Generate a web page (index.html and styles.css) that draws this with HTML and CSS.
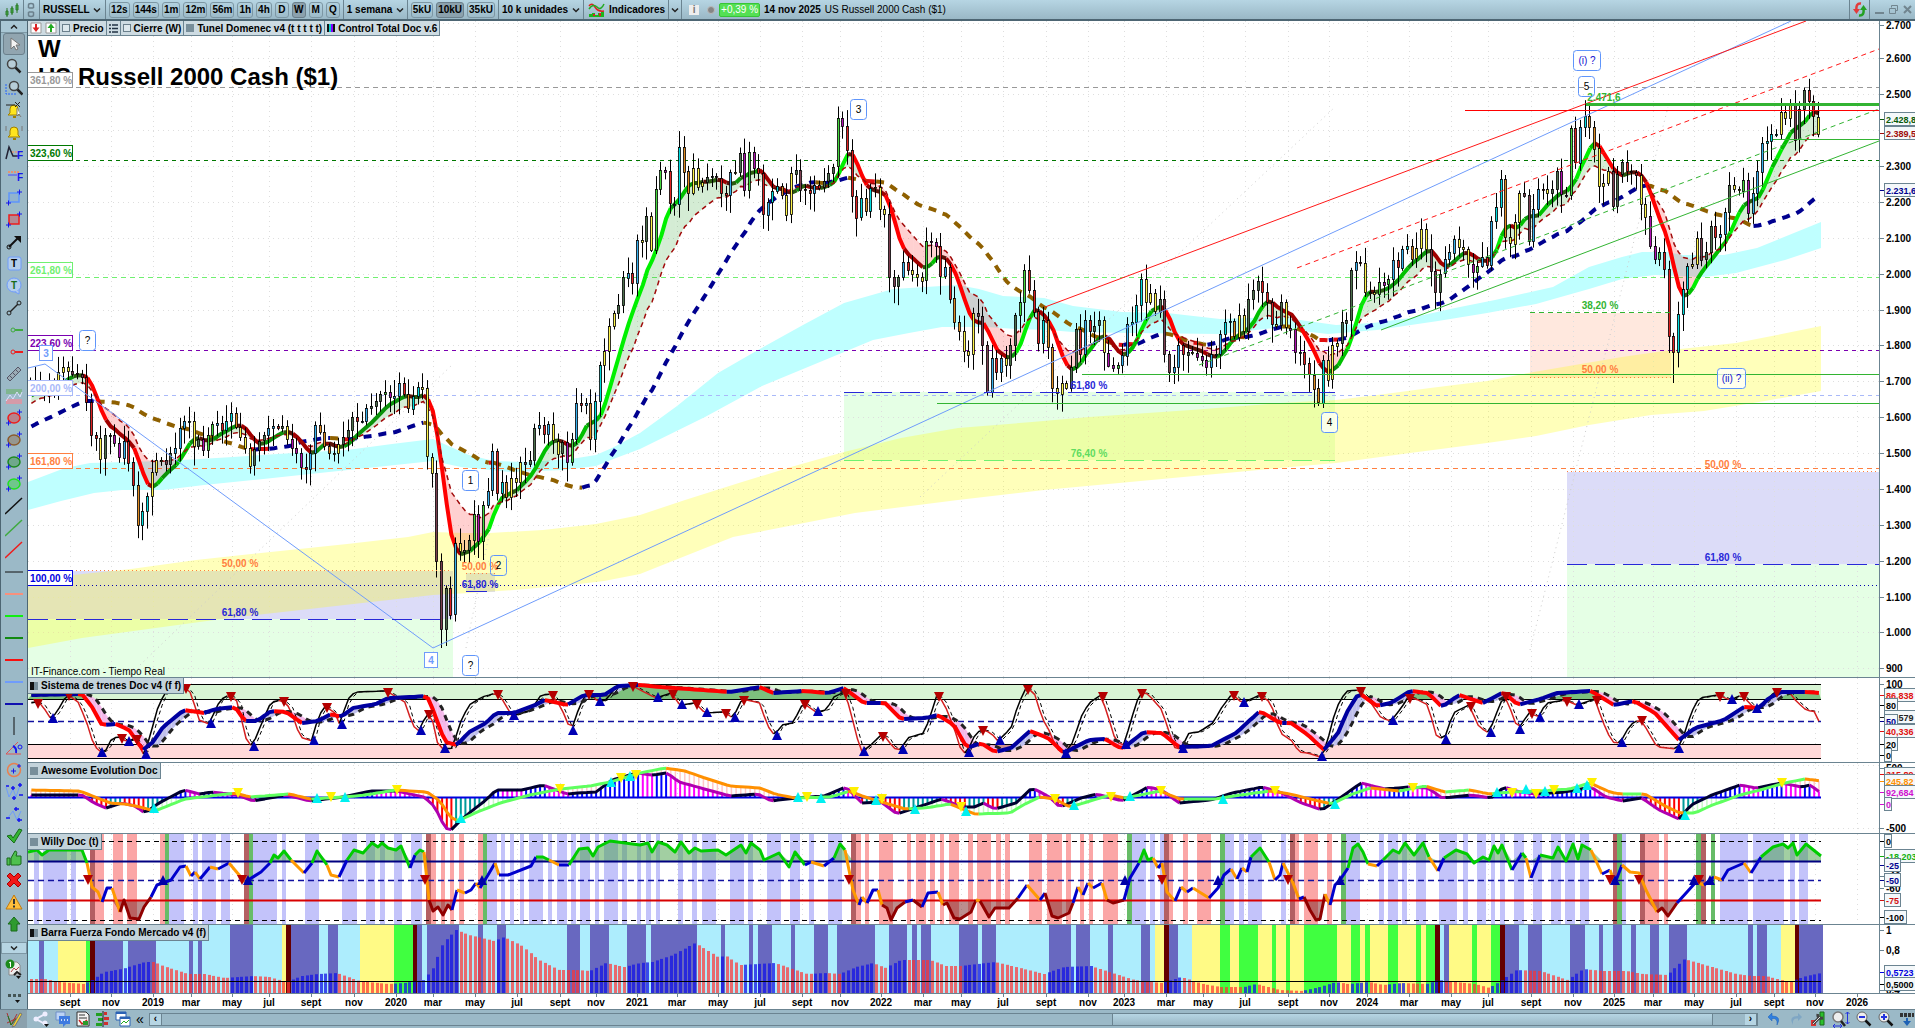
FILE: index.html
```html
<!DOCTYPE html>
<html lang="es">
<head>
  <meta charset="UTF-8">
  <meta name="viewport" content="width=device-width, initial-scale=1">
  <title>US Russell 2000 Cash ($1)</title>
  <link rel="stylesheet" href="styles.css">
</head>
<body>

<!-- Top bar -->
<header class="topbar">
  <button class="icon-btn logo"><svg width="16" height="16" viewBox="0 0 16 16"><path d="M3 6v9M8 4v9M13 1v10" stroke="#2c7a2c"/><path d="M2 9h2v4H2zM7 6h2v5H7zM12 3h2v5h-2z" fill="#3faa3f" stroke="#2c7a2c"/></svg></button>
  <button class="icon-btn link"><svg width="8" height="16" viewBox="0 0 8 16"><path d="M1.500 6V3q0-1.500 2.500-1.500T6.500 3v3M1.500 10v3q0 1.500 2.500 1.500T6.500 13v-3M1.500 6h5M1.500 10h5" fill="none" stroke="#6b808c" stroke-width="1.500"/></svg></button>
  <div class="group symbol">
    <select aria-label="Valor"><option>RUSSELL</option></select>
    <svg class="chev" width="8" height="6" viewBox="0 0 8 6"><path d="M1 1.500l3 3 3-3"/></svg>
  </div>
  <div class="group frames">
    <button>12s</button><button>144s</button><button>1m</button><button>12m</button><button>56m</button><button>1h</button><button>4h</button><button>D</button><button class="on">W</button><button>M</button><button>Q</button>
  </div>
  <div class="group">
    <select aria-label="Intervalo"><option>1 semana</option></select>
    <svg class="chev" width="8" height="6" viewBox="0 0 8 6"><path d="M1 1.500l3 3 3-3"/></svg>
  </div>
  <div class="group units">
    <button>5kU</button><button class="on">10kU</button><button>35kU</button>
  </div>
  <div class="group">
    <select aria-label="Unidades"><option>10 k unidades</option></select>
    <svg class="chev" width="8" height="6" viewBox="0 0 8 6"><path d="M1 1.500l3 3 3-3"/></svg>
  </div>
  <button class="indicators"><svg width="17" height="16" viewBox="0 0 17 16"><path d="M1 4q3-4 6 1t9 4" fill="none" stroke="#d22" stroke-width="1.500"/><path d="M1 7q4-6 8-2t7-3" fill="none" stroke="#2a2" stroke-width="1.500"/><path d="M1 15v-3h3v-1h3v2h3v-2h3v-1h3v5z" fill="#1cb51c"/><path d="M5 12h2v2H5zM11 11h2v3h-2z" fill="#d22"/></svg>Indicadores</button>
  <button class="drop"><svg class="chev" width="8" height="6" viewBox="0 0 8 6"><path d="M1 1.500l3 3 3-3"/></svg></button>
  <div class="quote">
    <span class="info">i</span><span class="dot"></span><span class="badge">+0,39 %</span><b>14 nov 2025</b><span>US Russell 2000 Cash ($1)</span>
  </div>
  <button class="refresh"><svg width="14" height="15" viewBox="0 0 14 15"><path d="M8 1.500C4 1 3 4 3.500 8" fill="none" stroke="#e23b3b" stroke-width="2.500"/><path d="M0 7h7l-3.500 5z" fill="#e23b3b"/><path d="M6 13.500c4 .5 5-2.500 4.500-6" fill="none" stroke="#23a023" stroke-width="2.500"/><path d="M7 8h7l-3.500-5z" fill="#23a023"/></svg></button>
  <div class="window">
    <button><svg width="9" height="9" viewBox="0 0 9 9"><path d="M0 8h9" stroke-width="2"/></svg></button>
    <button><svg width="9" height="9" viewBox="0 0 9 9"><path d="M2.500 2.500v-2h6v5h-2M.5 3.500h6v5h-6z"/></svg></button>
    <button><svg width="9" height="9" viewBox="0 0 9 9"><path d="M1 1l7 7M8 1l-7 7" stroke-width="2"/></svg></button>
  </div>
</header>

<div class="workspace">
  <!-- Drawing tools -->
  <nav class="tools">
    <button class="collapse"><svg class="chev" width="8" height="6" viewBox="0 0 8 6"><path d="M1 4.500l3-3 3 3"/></svg></button>
    <div class="tool-list" id="tools"></div>
    <button class="expand"><svg class="chev" width="8" height="6" viewBox="0 0 8 6"><path d="M1 1.500l3 3 3-3"/></svg></button>
    <button class="settings"><svg width="18" height="20" viewBox="0 0 18 20"><path d="M4 3h8l3 3v10H4z" fill="#eee" stroke="#888"/><path d="M6 13l3-4 2 2 3-3" fill="none" stroke="#a44"/><circle cx="5" cy="5" r="4.500" fill="#1c8a1c"/><path d="M4 4l1.500-1v5" stroke="#fff" fill="none"/><path d="M9 16l3-3 4 3" fill="none" stroke="#222" stroke-width="2"/><path d="M11 17h5l-2.500 3z" fill="#111"/></svg></button>
    <button class="more"><svg width="18" height="14" viewBox="0 0 18 14"><path d="M3 4h3v3H3zM8 4h3v3H8zM13 4h3v3h-3z" fill="#455"/><path d="M10 10h5l-2.500 3z" fill="#111"/></svg></button>
  </nav>

  <!-- Chart panes -->
  <main class="charts">
    <section class="pane price">
      <svg class="plot" id="price" preserveAspectRatio="none" viewBox="28 21 1851 656"></svg>
      <svg class="scale" id="priceScale" preserveAspectRatio="none" viewBox="0 21 35 656"></svg>
      <div class="legend">
        <span><svg width="12" height="12" viewBox="0 0 12 12"><path d="M1 1h10v10H1z" fill="#fff" stroke="#999"/><path d="M6 2v4" stroke="#d22" stroke-width="2"/><path d="M2.500 5.500h7L6 10z" fill="#d22"/></svg><svg width="12" height="12" viewBox="0 0 12 12"><path d="M1 1h10v10H1z" fill="#fff" stroke="#999"/><path d="M6 10V6" stroke="#2a2" stroke-width="2"/><path d="M2.500 6h7L6 1.500z" fill="#2a2"/></svg></span>
        <label><input type="checkbox">Precio</label>
        <button><svg width="9" height="9" viewBox="0 0 9 9"><path d="M0 1h2M0 4.500h2M0 8h2M3 1h6M3 4.500h6M3 8h6" stroke="#234" stroke-width="1.500"/></svg></button>
        <label><input type="checkbox">Cierre (W)</label>
        <span><i class="swatch"></i>Tunel Domenec v4 (t t t t t)</span>
        <span><i class="swatch stripes"></i>Control Total Doc v.6</span>
      </div>
      <h1>W<br>US Russell 2000 Cash ($1)</h1>
      <small>IT-Finance.com - Tiempo Real</small>
      <svg class="tags" id="tags" preserveAspectRatio="none" viewBox="28 21 1851 656"></svg>
    </section>
    <section class="pane trenes">
      <svg class="plot" id="trenes" preserveAspectRatio="none" viewBox="28 0 1851 84"></svg>
      <svg class="scale" id="trenesScale" preserveAspectRatio="none" viewBox="0 0 35 84"></svg>
      <div class="legend"><span><i class="swatch half"></i>Sistema de trenes Doc v4 (f f)</span></div>
    </section>
    <section class="pane awesome">
      <svg class="plot" id="awesome" preserveAspectRatio="none" viewBox="28 0 1851 70"></svg>
      <svg class="scale" id="awesomeScale" preserveAspectRatio="none" viewBox="0 0 35 70"></svg>
      <div class="legend"><span><i class="swatch"></i>Awesome Evolution Doc</span></div>
    </section>
    <section class="pane willy">
      <svg class="plot" id="willy" preserveAspectRatio="none" viewBox="28 0 1851 90"></svg>
      <svg class="scale" id="willyScale" preserveAspectRatio="none" viewBox="0 0 35 90"></svg>
      <div class="legend"><span><i class="swatch"></i>Willy Doc (t)</span></div>
    </section>
    <section class="pane barra">
      <svg class="plot" id="barra" preserveAspectRatio="none" viewBox="28 0 1851 68"></svg>
      <svg class="scale" id="barraScale" preserveAspectRatio="none" viewBox="0 0 35 68"></svg>
      <div class="legend"><span><i class="swatch half"></i>Barra Fuerza Fondo Mercado v4 (f)</span></div>
    </section>
    <svg class="dates" id="dates" preserveAspectRatio="none" viewBox="28 0 1887 15"></svg>
  </main>
</div>

<!-- Bottom bar -->
<footer class="bottombar">
  <button class="draw"><svg width="18" height="17" viewBox="0 0 18 17"><path d="M2 2l4 12L12 3M2 12L14 6" fill="none" stroke="#a33"/><path d="M3 5l3 9 5-6" fill="none" stroke="#1c7a1c"/><path d="M8 14l7-12 2 1-7 12-3 1z" fill="#f6d32e" stroke="#777"/></svg></button>
  <button><svg width="18" height="16" viewBox="0 0 18 16"><path d="M13 3L4 8l9 5" fill="none" stroke="#eef" stroke-width="2"/><circle cx="13" cy="3" r="2.500" fill="#eef"/><circle cx="4" cy="8" r="2.500" fill="#eef"/><circle cx="13" cy="12" r="2.500" fill="#eef"/><path d="M12 13h5l-2.500 3z" fill="#111"/></svg></button>
  <button><svg width="16" height="16" viewBox="0 0 16 16"><path d="M1 1h9v8H1z" fill="#bcd3f5" stroke="#6f8fc8"/><path d="M4 5h11v8h-4l-3 3v-3H4z" fill="#3f7be0"/><path d="M6 9h1M9 9h1M12 9h1" stroke="#fff" stroke-width="1.500"/></svg></button>
  <button><svg width="14" height="16" viewBox="0 0 14 16"><path d="M1 1h9l3 3v11H1z" fill="#f4f4f4" stroke="#333"/><path d="M3 4h6M3 7h8" stroke="#333"/><path d="M3 9l3 4 5-4" stroke="#c22" fill="none" stroke-width="1.500"/><path d="M7 10h5v4H7z" fill="#2b9b2b"/></svg></button>
  <button><svg width="15" height="16" viewBox="0 0 15 16"><path d="M1 2h6v3H1zM3 7h5v3H3zM1 12h6v3H1z" fill="#22a022"/><path d="M9 1h3v3H9zM9 6h5v3H9zM9 11h4v3H9z" fill="#d03030"/><path d="M8 0v16" stroke="#222"/></svg></button>
  <button><svg width="16" height="16" viewBox="0 0 16 16"><path d="M1 1h10v8H1z" fill="#fff" stroke="#2b62b5"/><path d="M1 2h10" stroke="#2b62b5" stroke-width="2"/><path d="M5 6h10v9H5z" fill="#fff" stroke="#2b62b5"/><path d="M5 7h10" stroke="#2b62b5" stroke-width="2"/><path d="M6 13l3-3 2 2 3-3" fill="none" stroke="#2a2"/></svg></button>
  <span class="less">«</span>
  <div class="scrollbar"><button>‹</button><div class="track"><div class="thumb"></div></div><button>›</button></div>
  <button><svg width="16" height="14" viewBox="0 0 14 14"><path d="M5 1L1 5l4 4V6.500q6-1 5 6.500 5-9-5-9z" fill="#2f7fe0" stroke="#1c5fb5" stroke-width=".5"/></svg></button>
  <button><svg width="16" height="14" viewBox="0 0 14 14"><path d="M9 1l4 4-4 4V6.500q-6-1-5 6.500-5-9 5-9z" fill="#7fa6c4"/></svg></button>
  <button><svg width="16" height="16" viewBox="0 0 16 16"><path d="M10 1h4v13h-4z" fill="#2cc02c" stroke="#186b18"/><path d="M1 9h5v6H1z" fill="#d33"/><path d="M3 13l7-7M8 3q-1 5 5 4" fill="none" stroke="#444" stroke-width="3"/><path d="M3 13l7-7" stroke="#ddd"/></svg></button>
  <button><svg width="18" height="17" viewBox="0 0 18 17"><circle cx="6" cy="6" r="5" fill="#eee" stroke="#777" stroke-width="1.500"/><path d="M9 10l4 5" stroke="#222" stroke-width="2.500"/><path d="M15.500 1v12M13.500 3l2-2 2 2M13.500 11l2 2 2-2M1 15h9M3 13l-2 2 2 2M8 13l2 2-2 2" fill="none" stroke="#2433dd"/></svg></button>
  <button><svg width="16" height="16" viewBox="0 0 16 16"><circle cx="6" cy="6" r="5" fill="#eee" stroke="#666"/><path d="M9.500 9.500l5 5" stroke="#111" stroke-width="2.500"/><path d="M3 6h6" stroke="#2433dd" stroke-width="2"/></svg></button>
  <button><svg width="16" height="16" viewBox="0 0 16 16"><circle cx="6" cy="6" r="5" fill="#eee" stroke="#666"/><path d="M9.500 9.500l5 5" stroke="#111" stroke-width="2.500"/><path d="M3 6h6M6 3v6" stroke="#2433dd" stroke-width="2"/></svg></button>
  <button><svg width="14" height="15" viewBox="0 0 14 15"><path d="M0 3h14" stroke="#333" stroke-width="4" stroke-dasharray="3 1"/><path d="M7 6v5" stroke="#1f62b5" stroke-width="2"/><path d="M3 9h8l-4 5z" fill="#1f62b5"/></svg></button>
</footer>

<script src="chart.js"></script>
</body>
</html>
```

FILE: styles.css
```css
* {
  box-sizing: border-box;
}
body {
  margin: 0;
  height: 100vh;
  display: flex;
  flex-direction: column;
  overflow: hidden;
  background: #9bb9c7;
  color: #000;
  font-family: "Liberation Sans", Arial, sans-serif;
  font-size: 10px;
}
button, select {
  font: inherit;
  color: inherit;
  padding: 0;
  margin: 0;
  border: 0;
  background: none;
  white-space: nowrap;
}
select {
  appearance: none;
}
svg {
  display: block;
  flex: none;
}
.chev path {
  fill: none;
  stroke: #222;
  stroke-width: 1.5;
}

/* top bar */
.topbar {
  flex: none;
  height: 21px;
  display: flex;
  align-items: stretch;
  background: linear-gradient(#b6d5e3, #9ab8c6);
  border-bottom: 2px solid #4d6673;
  font-weight: bold;
}
.topbar > * {
  display: flex;
  align-items: center;
  border-right: 1px solid #6b8491;
}
.logo {
  width: 24px;
  padding-left: 4px;
}
.link {
  width: 16px;
  padding-left: 3px;
}
.group {
  padding: 0 3px;
  gap: 3px;
}
.symbol {
  padding-right: 4px;
}
.frames button, .units button {
  height: 16px;
  min-width: 14px;
  padding: 0 1px;
  border: 1px solid #7d97a4;
  border-radius: 3px;
  text-align: center;
}
.frames .on, .units .on {
  background: #8ba1ad;
  border-color: #6b808c;
}
.indicators {
  padding: 0 3px 0 4px;
  gap: 4px;
}
.drop {
  padding: 0 2px;
}
.quote {
  flex: 1;
  padding-left: 7px;
  gap: 4px;
  font-weight: normal;
}
.info {
  width: 10px;
  height: 10px;
  margin-right: 4px;
  background: #eee;
  color: #777;
  font-weight: bold;
  line-height: 10px;
  text-align: center;
}
.dot {
  width: 8px;
  height: 8px;
  border-radius: 50%;
  background: #858585;
  border: 1px solid #bbb;
}
.badge {
  height: 14px;
  padding: 0 1px;
  border: 1px solid #37c437;
  border-radius: 2px;
  background: #54e054;
  color: #fff;
  line-height: 12px;
}
.refresh {
  width: 20px;
  padding-left: 3px;
}
.window {
  width: 45px;
  gap: 5px;
  padding-left: 5px;
  border: 0;
}
.window path {
  fill: none;
  stroke: #71858f;
}

/* left tools */
.workspace {
  flex: 1;
  min-height: 0;
  display: flex;
}
.tools {
  width: 28px;
  flex: none;
  display: flex;
  flex-direction: column;
  border-left: 1px solid #4d6673;
  border-right: 1px solid #4d6673;
}
.tools button {
  display: flex;
  align-items: center;
  justify-content: center;
  flex: none;
  height: 22px;
}
.tools .collapse {
  height: 12px;
  background: #a9c7d5;
  border-bottom: 1px solid #7d97a4;
}
.tool-list {
  flex: 1;
  min-height: 0;
  overflow: hidden;
  display: flex;
  flex-direction: column;
}
.tool-list button:first-child {
  margin: 0 2px;
  border: 1px solid #6b808c;
  border-radius: 3px;
  background: #91a5b0;
}
.tools .expand {
  height: 12px;
  background: #b6d5e3;
  border: 1px solid #7d97a4;
}
.tools .settings {
  height: 30px;
}
.tools .more {
  height: 25px;
}

/* panes, the shares leave out the 1px border of each */
.charts {
  flex: 1;
  min-width: 0;
  display: flex;
  flex-direction: column;
  background: #fff;
}
.pane {
  position: relative;
  min-height: 0;
  display: flex;
  border-bottom: 1px solid #6b8491;
}
.price { flex: 656 0 0; }
.trenes { flex: 84 0 0; }
.awesome { flex: 70 0 0; }
.willy { flex: 90 0 0; }
.barra { flex: 68 0 0; }
.plot {
  flex: 1;
  min-width: 0;
  height: 100%;
}
.scale {
  width: 36px;
  height: 100%;
  border-left: 1px solid #6b8491;
}
.tags {
  position: absolute;
  top: 0;
  left: 0;
  width: calc(100% - 36px);
  height: 100%;
}
.dates {
  width: 100%;
  height: 15px;
}
svg text {
  font-size: 10px;
  font-weight: bold;
}
svg .thin {
  font-weight: normal;
}
svg .value {
  font-size: 9px;
}
.legend {
  position: absolute;
  top: 0;
  left: 0;
  z-index: 1;
  display: flex;
  background: #cddbe2;
  border: 1px solid #6b8491;
  border-width: 0 1px 1px 0;
  font-weight: bold;
}
.legend > * {
  height: 14px;
  display: flex;
  align-items: center;
  gap: 3px;
  padding: 0 2px;
  border-right: 1px solid #6b8491;
}
.legend > :last-child {
  border: 0;
}
.legend input {
  appearance: none;
  width: 8px;
  height: 8px;
  margin: 0;
  border: 1px solid #6b808c;
  background: #dde8ed;
}
.swatch {
  width: 8px;
  height: 8px;
  background: #788e9a;
}
.half {
  background: linear-gradient(to right, #111 50%, #788e9a 50%);
}
.stripes {
  background: linear-gradient(to right, #111 25%, #0cc 25% 50%, #80f 50% 70%, #111 70%);
}
.trenes .legend, .awesome .legend, .willy .legend, .barra .legend {
  background: #c3d3db;
}
.trenes .legend span, .awesome .legend span, .willy .legend span, .barra .legend span {
  height: 15px;
}
.price h1 {
  position: absolute;
  top: 14px;
  left: 10px;
  margin: 0;
  font-size: 24px;
  line-height: 28px;
}
.price small {
  position: absolute;
  bottom: 0;
  left: 3px;
  font-size: 10px;
}

/* bottom bar */
.bottombar {
  flex: none;
  height: 19px;
  display: flex;
  align-items: center;
  gap: 5px;
  border-top: 1px solid #6b8491;
}
.bottombar .draw {
  width: 27px;
  height: 18px;
  padding-left: 5px;
  background: #8ba1ad;
}
.less {
  font-size: 14px;
  line-height: 16px;
}
.scrollbar {
  flex: 1;
  height: 13px;
  display: flex;
  margin-right: 3px;
  border: 1px solid #6b8491;
}
.scrollbar button {
  width: 12px;
  font-weight: bold;
  line-height: 10px;
  background: #b6d5e3;
  border-right: 1px solid #6b8491;
}
.track {
  flex: 1;
  display: flex;
}
.thumb {
  width: 38%;
  margin-left: 60%;
  background: linear-gradient(#b6d5e3, #9ab8c6);
  border: 1px solid #6b8491;
  border-width: 0 1px;
}
.scrollbar ~ button {
  margin-right: 1px;
}
```

FILE: chart.js
```js
// ---------- helpers ----------
const $ = id => document.getElementById(id);
const FIRST = 31.4, STEP = 4.667, LAST = 1821;
const weekX = i => FIRST + i * STEP;
const priceY = p => 58.4 + (2600 - p) * 0.3588;
const pts = s => s.trim().split(/\s+/).map(p => p.split(',').map(Number));
const r = n => Math.round(n * 10) / 10;
const d = a => 'M' + a.map(p => r(p[0]) + ' ' + r(p[1])).join('L');
const line = (x1, y1, x2, y2, color, w = 1, dash = '') =>
  `<path d="M${x1} ${y1}L${x2} ${y2}" stroke="${color}" stroke-width="${w}" fill="none" stroke-dasharray="${dash}"/>`;
const rect = (x, y, w, h, fill, extra = '') =>
  `<rect x="${r(x)}" y="${r(y)}" width="${r(w)}" height="${r(h)}" fill="${fill}" ${extra}/>`;
const text = (x, y, s, color = '#000', extra = '') =>
  `<text x="${x}" y="${y}" fill="${color}" ${extra}>${s}</text>`;
const area = (a, b, fill) => `<path d="${d(a.concat([...b].reverse()))}Z" fill="${fill}"/>`;
const tri = (x, y, up, color, s = 5) => up
  ? `<path d="M${r(x - s)} ${r(y + s)}h${2 * s}l${-s} ${-2 * s}z" fill="${color}"/>`
  : `<path d="M${r(x - s)} ${r(y - s)}h${2 * s}l${-s} ${2 * s}z" fill="${color}"/>`;

function at(a, x) {
  if (x <= a[0][0]) return a[0][1];
  for (let i = 1; i < a.length; i++) {
    if (x <= a[i][0]) {
      const [x0, y0] = a[i - 1], [x1, y1] = a[i];
      return y0 + (y1 - y0) * (x - x0) / (x1 - x0);
    }
  }
  return a[a.length - 1][1];
}
// one path per run of equal colour
function runs(a, pick, w, dash = '') {
  let out = '', i = 1;
  while (i < a.length) {
    const c = pick(i);
    const run = [a[i - 1]];
    while (i < a.length && pick(i) === c) run.push(a[i++]);
    out += `<path d="${d(run)}" fill="none" stroke="${c}" stroke-width="${w}" stroke-linejoin="round" stroke-dasharray="${dash}"/>`;
  }
  return out;
}
// fill between two series, colour depends on which one is on top
function between(a, b, above, below) {
  let out = '';
  for (let i = 1; i < a.length; i++) {
    const up = a[i][1] + a[i - 1][1] < b[i][1] + b[i - 1][1];
    out += area([a[i - 1], a[i]], [b[i - 1], b[i]], up ? above : below);
  }
  return out;
}

// ---------- dates ----------
const ticks = [70, 111, 153, 191, 232, 269, 311, 354, 396, 433, 475, 517, 560, 596, 637, 677, 718, 760, 802, 840, 881, 923, 961, 1003, 1046, 1088, 1124, 1166, 1203, 1245, 1288, 1329, 1367, 1409, 1451, 1488, 1531, 1573, 1614, 1653, 1694, 1736, 1774, 1815, 1857];
const months = ['mar', 'may', 'jul', 'sept', 'nov'];
const tickName = i => i < 2 ? months[i + 3] : (i - 2) % 6 === 0 ? String(2019 + (i - 2) / 6) : months[(i - 2) % 6 - 1];
$('dates').innerHTML = ticks.map((x, i) => line(x + .5, 0, x + .5, 3, '#6b8491') + text(x, 12, tickName(i), '#000', 'text-anchor="middle"')).join('');
const grid = (h, top = 0) => ticks.map(x => line(x + .5, top, x + .5, h, '#dedede', 1, '1 4')).join('');

// ---------- weekly closes ----------
const close = `1700 1705 1695 1670 1690 1690 1725 1740 1730 1722 1720 1712 1643 1550 1543 1485 1550 1550 1527 1488 1535 1475 1411 1300 1338 1380 1447 1480 1482 1470 1500 1515 1570 1590 1590 1520 1540 1508 1550 1580 1585 1565 1590 1612 1572 1545 1515 1465 1510 1535 1550 1570 1575 1570 1575 1540 1515 1500 1460 1455 1500 1578 1558 1520 1500 1500 1525 1545 1565 1600 1590 1590 1625 1630 1645 1665 1670 1655 1660 1695 1665 1625 1660 1685 1680
1490 1445 1200 1010 1125 1050 1248 1225 1230 1258 1330 1255 1355 1395 1505 1388 1420 1378 1430 1420 1475 1470 1480 1570 1578 1553 1580 1535 1500 1530 1475 1540 1640 1635 1640 1540 1645 1745 1785 1855 1890 1912 1990 2003 1975 2095
2089 2160 2066 2236 2290 2285 2195 2195 2354 2285 2225 2295 2243 2255 2270 2271 2268 2225 2220 2284 2282 2335 2233 2340 2295 2280 2165 2200 2230 2245 2220 2165 2280 2290 2235 2232 2225 2248 2240 2258 2280 2298 2433 2412 2345 2217 2156 2210 2175 2238 2242 2180 2165 1990 1965 1990 2032 2010 1998 1990 1980 2090 2088 2078 1995 2020 1932 1865 1840 1785 1775 1890 1882 1800 1670 1765 1725 1765 1745 1800 1885 1920 2010 1955 1895 1805 1870 1795 1680 1665 1695 1682 1740 1845 1775 1870 1840 1855 1870 1780 1745 1738 1745 1772 1860 1865 1912 1985 1920 1945 1895 1930 1776 1727 1740 1800 1775 1782 1780 1770 1760 1740 1775 1775 1832 1865 1868 1825 1885 1840 1930 1955 1980 1948 1920 1860
1855 1920 1850 1845 1780 1783 1750 1718 1680 1640 1760 1705 1800 1807 1865 1872 2010 2032 2030 1950 1950 1945 1978 1970 1985 2038 2018 2070 2078 2043 2072 2125 2070 2008 1950 2000 2040 2060 2098 2075 2070 2027 2005 2022 2047 2025 2147 2187 2265 2103 2085 2145 2225 2218 2090 2180 2237 2235 2225 2235 2285 2220 2218 2405 2310 2410 2440 2410 2350 2243 2252 2285 2187 2277 2310 2285 2283 2275 2195 2160 2077 2040 2060 2012 1825 1780 1887 1957 2022 2027 2100 2040 2060 2133 2103 2110 2172 2247 2235 2232 2262 2170 2225 2285 2365 2370 2390 2390 2452 2435 2477 2375 2460 2512 2480 2437 2390`.trim().split(/\s+/).map(Number);

// weeks before the first candle, they only seed the averages
const before = Array.from({ length: 34 }, (_, i) => 1460 + i * 6.500);
const all = before.concat(close);
function ema(n, src = all) {
  let e = src[0];
  const k = 2 / (n + 1);
  return src.map(v => (e += (v - e) * k));
}
const smooth = a => a.map((v, i) => (v + a[Math.max(0, i - 1)] + a[Math.max(0, i - 2)]) / 3);
const toPoints = a => a.slice(34).map((v, i) => [weekX(i), priceY(v)]);
const sma = n => close.map((_, i) => {
  const w = all.slice(i + 35 - n, i + 35);
  return [weekX(i), priceY(w.reduce((a, b) => a + b) / n)];
});

// ---------- price pane ----------
const cyanTop = pts('28,482 65,468 90,463 163,461 200,459 233,457 294,453 347,450 392,444 433,439 453,448 469,455 494,461 527,462 571,459 596,455 612,448 640,433 677,406 718,373 758,350 803,325 844,303 893,289 958,285 979,289 1003,296 1044,298 1073,306 1122,312 1167,313 1220,319 1280,317 1300,320 1336,325 1373,323 1410,318 1455,308 1495,300 1553,287 1589,267 1622,257 1642,252 1667,252 1683,255 1724,255 1757,248 1789,235 1821,222');
const cyanBottom = pts('28,510 61,501 94,493 122,490 163,490 204,485 253,480 310,474 367,468 433,461 461,467 510,472 563,470 596,466 616,458 640,449 705,417 762,386 820,362 873,340 909,333 942,327 987,327 1016,329 1048,330 1073,332 1130,333 1220,334 1275,328 1328,334 1377,330 1438,321 1487,313 1536,304 1589,289 1622,279 1655,275 1704,277 1736,273 1785,260 1821,248');
const yellowTop = pts('28,587 73,575 131,569 196,560 261,553 347,544 408,537 433,532 465,533 490,533 543,530 596,524 640,515 685,500 742,482 791,467 844,452 901,438 958,428 1032,422 1089,417 1191,410 1280,403 1336,400 1385,394 1430,388 1487,381 1528,373 1569,366 1622,357 1671,350 1736,343 1777,335 1821,326');
const yellowBottom = pts('28,648 82,638 163,627 229,618 327,607 433,595 469,593 514,590 571,585 604,581 640,574 733,537 855,513 958,500 1044,490 1280,468 1336,463 1410,453 1487,443 1536,436 1589,425 1651,415 1704,411 1765,401 1821,391');

const LAV = '#dcdcf8', MINT = '#e5ffe5';
let p = '';
p += rect(28, 571, 425, 48, LAV) + rect(28, 619, 425, 58, MINT);
p += rect(466, 573, 29, 19, LAV);
p += rect(844, 392, 491, 68, MINT);
p += rect(1530, 313, 141, 65, '#ffe8de');
p += rect(1567, 472, 312, 92.500, LAV) + rect(1567, 564.500, 312, 113, MINT);
p += grid(677, 21);
for (let v = 900; v <= 2700; v += 100) p += line(28, Math.round(priceY(v)) + .5, 1879, Math.round(priceY(v)) + .5, '#dedede', 1, '1 4');
p += area(cyanTop, cyanBottom, '#bfffff') + area(yellowTop, yellowBottom, 'rgba(255,255,0,.27)');
p += line(140, 665, 452, 365, '#ccc', 1, '1 4') + line(920, 497, 1335, 107, '#ccc', 1, '1 4') + line(1530, 650, 1668, 107, '#ccc', 1, '1 4') + line(466, 648, 490, 530, '#ccc', 1, '1 4');

// fibonacci levels
const fibs = [[87, '#999999', '361,80 %', '5 4'], [160, '#007800', '323,60 %', '4 4'], [277, '#70f070', '261,80 %', '5 4'], [350, '#7a00b0', '223,60 %', '4 4'], [395, '#a9b9f9', '200,00 %', '4 4'], [468, '#ff7f40', '161,80 %', '5 4'], [585, '#0000b0', '100,00 %', '1 3']];
fibs.forEach(f => p += line(76, f[0] + .5, 1879, f[0] + .5, f[1], 1, f[3]));

// averages
const fast = toPoints(smooth(ema(6))), mid = toPoints(ema(15)), slow = sma(34);
p += between(fast, mid, 'rgba(40,160,40,.2)', 'rgba(255,60,60,.24)');
const slowColor = i => {
  const s = slow[i][1] - slow[i - 1][1];
  const turning = Math.abs(s) < .4 && slow[Math.max(0, i - 6)][1] < slow[i][1] - .5;
  return turning ? '#e01010' : s > .1 ? '#8f6000' : '#00008f';
};
p += runs(slow, slowColor, 4, '8 7');
const maColor = i => {
  const s = fast[i - 1][1] - fast[i][1];
  return s > 9 ? '#00f000' : s > 5 ? '#00c000' : s > 2 ? '#0a920a' : s > 0 ? '#2a5c10' : s > -2 ? '#5a1208' : s > -7 ? '#a00000' : '#ff0000';
};
p += runs(fast, maColor, 4);
p += `<path d="${d(mid)}" fill="none" stroke="#a00a0a" stroke-width="1.500" stroke-dasharray="5 4"/>`;

// candles
const upColors = ['#4c704c', '#35b0ee', '#4c704c', '#fff44a', '#00dde0', '#35b0ee', '#44d83c'];
const downColors = ['#fff44a', '#e02020', '#7c3f50', '#fff44a', '#e08a20', '#e02020', '#b010b0'];
const spikes = { 88: 648, 89: 646, 351: 353, 352: 383 };
close.forEach((c, i) => {
  const o = all[i + 33];
  const n = (i * 7919 + 13) % 97, m = (i * 6151 + 5) % 89;
  const hi = priceY(Math.max(o, c)) - 2 - n / 7;
  const lo = spikes[i] || priceY(Math.min(o, c)) + 2 + m / 5;
  const x = Math.round(weekX(i));
  const y = Math.round(priceY(Math.max(o, c))) + .5, h = Math.max(1, Math.round(Math.abs(o - c) * .3588));
  p += line(x - .5, r(hi), x - .5, r(lo), '#000');
  p += rect(x - 1.500, y, 2, h, (c >= o ? upColors : downColors)[n % 7], 'stroke="#000" stroke-width=".8"');
});

// trend lines
p += `<path d="M28 368L45 364L433 648L1791 21" fill="none" stroke="#6f9cfb"/>`;
p += line(1045, 307, 1806, 21, '#ff1818') + line(1297, 268, 1879, 49, '#ff1818', 1, '5 4');
p += line(1199, 365, 1879, 109, '#32b432', 1, '5 4') + line(1381, 330, 1879, 141, '#32b432');
p += line(1586, 104.500, 1879, 104.500, '#32b432', 3) + line(1465, 110.500, 1879, 110.500, '#ff0000') + line(1773, 139.500, 1879, 139.500, '#32b432');
p += line(1082, 374.500, 1879, 374.500, '#32b432') + line(937, 403.500, 1879, 403.500, '#32b432');

const OR = '#ff7f40', BL = '#2828d8', GR = '#32b432';
p += line(28, 570.500, 452, 570.500, OR, 1, '1 3') + line(28, 619.500, 440, 619.500, BL, 1, '20 8');
p += line(466, 573.500, 495, 573.500, OR, 1, '1 3') + line(466, 591.500, 487, 591.500, BL);
p += line(844, 392.500, 1335, 392.500, BL, 1, '20 8') + line(844, 460.500, 1335, 460.500, '#70f070', 1, '20 8');
p += line(1530, 312.500, 1671, 312.500, GR, 1, '5 4') + line(1530, 377.500, 1671, 377.500, OR, 1, '1 3');
p += line(1567, 471.500, 1879, 471.500, OR, 1, '1 3') + line(1567, 564.500, 1879, 564.500, BL, 1, '20 8');
[[240, 567, '50,00 %', OR], [240, 616, '61,80 %', BL], [480, 570, '50,00 %', OR], [480, 588, '61,80 %', BL], [1089, 389, '61,80 %', BL], [1089, 457, '76,40 %', '#5fdc5f'], [1600, 309, '38,20 %', GR], [1600, 373, '50,00 %', OR], [1723, 468, '50,00 %', OR], [1723, 561, '61,80 %', BL], [1604, 101, '2.471,6', GR]]
  .forEach(t => p += text(t[0], t[1], t[2], t[3], 'text-anchor="middle"'));
$('price').innerHTML = p;

// labels over the chart
let t = '';
fibs.forEach(f => {
  const c = f[2] === '100,00 %' ? '#0000e0' : f[1];
  t += rect(27.500, f[0] - 14.500, 45, 15, '#fff', `stroke="${c}"`) + text(30, f[0] - 3, f[2], c);
});
[[79, 330, 16, 20, '?'], [850, 99, 16, 20, '3'], [462, 470, 16, 20, '1'], [490, 555, 16, 20, '2'], [462, 655, 16, 20, '?'], [1321, 412, 16, 20, '4'], [1578, 76, 16, 20, '5'], [1573, 50, 27, 20, '(i) ?', '#1010d0'], [1717, 368, 28, 20, '(ii) ?', '#1010d0']]
  .forEach(b => t += rect(b[0] + .5, b[1] + .5, b[2], b[3], b[4] === '2' || b[4] === '5' ? 'none' : 'rgba(255,255,255,.75)', 'rx="3" stroke="#5f95fb"') + text(b[0] + b[2] / 2 + .5, b[1] + 14, b[4], b[5] || '#000', 'class="thin" text-anchor="middle"'));
[[39, 345, '3'], [424, 652, '4']].forEach(b => t += rect(b[0] + .5, b[1] + .5, 13, 15, '#fff', 'stroke="#6f9cfb"') + text(b[0] + 7, b[1] + 12, b[2], '#6f9cfb', 'text-anchor="middle"'));
$('tags').innerHTML = t;

// scales on the right: [y, text], then boxed values [y, text, colour, width]
function scale(id, labels, boxes) {
  let s = '';
  labels.forEach(l => s += line(0, l[0] + .5, 4, l[0] + .5, '#6b8491') + text(6, l[0] + 4, l[1]));
  boxes.forEach(b => s += line(0, b[0] + .5, 4, b[0] + .5, b[2]) + rect(4.500, b[0] - 6.500, b[3] || 40, 13, '#f4f8fa', 'stroke="#6b8491"') + text(6, b[0] + 4, b[1], b[2], 'class="value"'));
  $(id).innerHTML = s;
}
const prices = [];
for (let v = 900; v <= 2700; v += 100) if (v !== 2400) prices.push([v === 2700 ? 25 : Math.round(priceY(v)), v < 1000 ? String(v) : (v / 1000).toFixed(3)]);
scale('priceScale', prices, [[119, '2.428,8', '#0a5a0a'], [133, '2.389,5', '#a00a0a'], [190, '2.231,6', '#00008f']]);
scale('trenesScale', [[6, '100']], [[17, '86,838', '#e01010'], [27, '80', '#000', 13], [39, '63,579', '#222'], [43, '50', '#00008f', 13], [53, '40,336', '#e01010'], [66, '20', '#000', 13], [77, '0', '#000', 7]]);
scale('awesomeScale', [[5, '500'], [65, '-500']], [[11, '315,89', '#e01010'], [18, '245,82', '#ff9000'], [29, '92,684', '#d010d0'], [41, '0', '#d010d0', 7]]);
scale('willyScale', [[42, '-40'], [54, '-60']], [[7, '0', '#000', 7], [22, '-18,203', '#10b010'], [31, '-25', '#00008f', 16], [46, '-50', '#00008f', 16], [66, '-75', '#d01010', 16], [83, '-100', '#000', 22]]);
scale('barraScale', [[5, '1'], [25, '0,8'], [65, '0,4']], [[47, '0,5723', '#0000e0'], [59, '0,5000', '#000']]);

// ---------- Sistema de trenes ----------
const train = pts('28,25 36,24 42,27 51,41 57,34 67,16 78,24 86,42 93,65 100,75 106,72 112,60 120,59 127,64 135,60 144,77 151,55 157,32 165,14 173,9 184,9 191,15 199,42 209,46 220,22 229,17 238,24 245,59 252,69 263,42 271,24 282,22 290,30 296,47 300,59 312,63 318,39 325,28 335,35 340,47 347,22 355,14 386,13 400,21 406,25 412,47 419,53 427,35 432,40 437,64 443,71 453,70 459,47 469,27 482,19 496,15 502,21 512,38 531,32 541,17 551,16 561,29 571,53 580,27 587,15 592,17 598,24 606,22 616,9 631,7 640,12 656,20 671,15 680,27 695,25 705,35 724,34 733,40 742,21 760,25 767,47 775,58 781,47 793,45 803,25 816,34 826,32 834,19 844,14 850,30 856,57 862,74 873,65 881,57 887,60 893,70 901,72 907,60 924,55 930,39 937,17 944,25 954,50 962,75 967,75 973,60 981,51 991,55 998,63 1011,50 1018,27 1026,10 1034,14 1042,40 1050,54 1056,70 1064,76 1073,64 1081,39 1089,25 1101,17 1107,35 1116,64 1124,67 1132,39 1140,14 1148,16 1162,32 1169,54 1175,70 1181,71 1189,55 1199,54 1213,45 1222,29 1232,16 1242,25 1260,17 1271,25 1280,55 1291,62 1299,74 1308,75 1320,79 1326,70 1332,44 1338,27 1346,13 1359,12 1369,22 1381,40 1391,43 1402,29 1408,19 1416,21 1428,27 1436,57 1444,62 1453,35 1469,27 1479,49 1489,55 1495,39 1504,17 1510,30 1518,52 1522,45 1530,34 1538,40 1546,25 1565,22 1577,27 1595,21 1602,42 1612,64 1620,65 1630,47 1640,41 1646,50 1657,69 1677,71 1683,60 1691,35 1699,20 1718,17 1730,22 1742,17 1755,31 1765,25 1775,13 1789,14 1797,24 1806,32 1816,34 1821,50');
const wagon = pts('28,17 82,16 92,29 102,47 116,46 129,52 143,72 153,64 163,49 184,32 204,35 216,31 235,29 245,43 257,43 271,33 286,34 302,45 318,43 331,36 341,39 353,30 376,26 388,20 412,19 427,18 433,32 445,64 457,67 469,54 486,45 496,35 514,35 535,27 545,22 567,27 584,17 604,17 618,8 640,7 660,9 689,11 730,14 760,9 773,15 803,13 828,15 844,10 864,25 885,25 901,41 926,40 938,37 954,47 967,70 981,65 995,74 1011,70 1030,53 1048,60 1064,75 1089,62 1105,61 1122,71 1144,54 1162,55 1179,69 1211,68 1236,55 1260,33 1280,45 1291,45 1308,57 1324,72 1338,55 1348,32 1359,15 1377,28 1391,25 1410,13 1428,15 1442,29 1459,17 1483,25 1504,14 1518,27 1540,21 1557,15 1591,13 1614,27 1634,23 1655,35 1679,62 1695,50 1724,42 1744,29 1759,30 1769,20 1781,14 1806,14 1821,15');
const weekly = f => close.map((_, i) => [weekX(i), f(weekX(i))]);
const wag = weekly(x => at(wagon, x));
const lag = weekly(x => (at(wagon, x - 5) + at(wagon, x - 10) + at(wagon, x - 15)) / 3);
const tr = weekly(x => at(train, x));
const trLag = weekly(x => at(train, x - 3));
let s = grid(84);
s += rect(28, 6.500, LAST - 28, 15, '#d8f4d4') + rect(28, 66, LAST - 28, 14, '#ffd9d9');
s += area(wag.map(q => [q[0], Math.min(q[1], 21)]), [[28, 21], [LAST, 21]], '#7dc07d');
s += area(wag.map(q => [q[0], Math.max(q[1], 66)]), [[28, 66], [LAST, 66]], '#cf9090');
s += [6.500, 21.500, 66.500, 80.500].map(y => line(28, y, LAST, y, '#000')).join('');
s += line(28, 43.500, LAST, 43.500, '#1010a0', 1.500, '6 4');
s += between(wag, lag, '#c0c0ec', '#f4b8ea');
s += `<path d="${d(trLag)}" fill="none" stroke="#000" stroke-dasharray="4 3"/>`;
s += runs(tr, i => tr[i][1] > tr[i - 1][1] ? '#d42020' : '#000', 1.500);
s += `<path d="${d(lag)}" fill="none" stroke="#222" stroke-width="3" stroke-dasharray="6 5"/>`;
s += runs(wag, i => wag[i][1] > wag[i - 1][1] ? '#ff0000' : '#0000a0', 4);
for (let i = 1; i < train.length - 1; i++) {
  const a = train[i - 1][1], b = train[i][1], c = train[i + 1][1];
  if (b <= a && b < c) s += tri(train[i][0] + 2, b + 2, false, '#b40000');
  if (b >= a && b > c) s += tri(train[i][0] + 2, b - 1, true, '#0000b4');
}
$('trenes').innerHTML = s;

// ---------- Awesome Evolution ----------
const aw = pts('28,32 82,32 94,40 106,45 122,40 135,43 145,50 159,40 184,27 200,31 212,29 237,32 253,38 286,32 310,38 343,34 371,28 396,28 424,34 435,44 445,65 451,67 461,57 473,47 486,37 496,27 522,27 543,22 567,31 576,30 596,29 612,17 637,10 652,12 667,10 679,19 701,25 730,33 758,31 771,38 795,35 824,33 846,24 862,40 881,39 897,51 918,44 942,36 962,44 975,44 983,40 995,46 1016,40 1032,25 1048,33 1060,44 1081,35 1097,31 1122,38 1148,24 1162,27 1179,40 1211,37 1232,30 1262,24 1280,29 1299,39 1322,47 1340,35 1361,20 1385,26 1410,24 1428,25 1442,35 1471,32 1491,35 1504,24 1520,29 1536,31 1565,29 1591,24 1606,34 1622,38 1642,35 1659,47 1679,56 1691,42 1712,32 1740,22 1757,25 1781,20 1802,24 1810,22 1821,30');
const sig = pts('28,27 80,28 95,34 110,40 125,41 140,44 155,48 165,44 185,36 210,33 235,30 250,34 290,31 310,36 345,34 365,32 396,27 427,29 440,38 450,54 458,58 475,50 500,40 530,32 560,26 590,23 610,19 640,10 665,5 685,8 705,15 730,23 760,25 775,31 795,35 830,34 850,28 862,33 885,40 905,46 925,45 950,41 960,45 975,51 1010,50 1025,41 1040,34 1055,36 1070,44 1090,38 1110,32 1125,35 1145,31 1160,28 1180,36 1215,36 1240,32 1270,28 1290,31 1310,36 1332,41 1350,32 1370,25 1400,28 1425,23 1445,29 1470,27 1490,31 1510,29 1540,28 1570,26 1590,20 1610,29 1620,31 1645,31 1665,43 1680,50 1695,50 1710,43 1740,32 1760,27 1785,20 1805,16 1821,18');
const awW = weekly(x => at(aw, x)), sigW = weekly(x => at(sig, x));
s = grid(70) + line(28, 2.500, 1879, 2.500, '#dedede', 1, '1 4') + line(28, 65.500, 1879, 65.500, '#dedede', 1, '1 4');
awW.forEach((q, i) => {
  const prev = awW[Math.max(0, i - 1)][1], y = q[1];
  s += line(r(q[0]), r(Math.min(y, sigW[i][1])), r(q[0]), r(Math.max(y, sigW[i][1])), sigW[i][1] < y ? '#ffc8c8' : '#c8f8c8', 1.500);
  s += y < 34.500 ? rect(q[0] - 1, y, 2, 34.500 - y, y < prev ? '#0000ff' : '#ff00ff') : rect(q[0] - 1, 34.500, 2, y - 34.500, y > prev ? '#ff0000' : '#009a9a');
});
s += line(28, 34.500, LAST, 34.500, '#0000e0', 2);
s += runs(awW, i => awW[i][1] > awW[i - 1][1] ? '#b000b0' : '#000030', 3);
s += runs(sigW, i => sigW[i][1] > sigW[i - 1][1] ? '#ff9000' : '#5fff5f', 3);
[[154, 45, 1], [238, 30, 0], [317, 35, 1], [331, 34, 0], [345, 34, 1], [397, 27, 0], [461, 55, 1], [560, 26, 0], [611, 19, 1], [621, 15, 0], [630, 13, 1], [636, 12, 0], [798, 34, 1], [807, 34, 0], [821, 35, 1], [854, 29, 0], [876, 37, 1], [882, 36, 0], [915, 46, 1], [961, 44, 0], [966, 48, 1], [1055, 36, 0], [1074, 42, 1], [1111, 34, 0], [1130, 33, 1], [1161, 28, 0], [1223, 36, 1], [1275, 28, 0], [1335, 41, 1], [1413, 25, 0], [1497, 29, 1], [1512, 30, 0], [1526, 26, 1], [1536, 31, 0], [1545, 28, 1], [1554, 27, 0], [1577, 25, 1], [1587, 22, 1], [1592, 20, 0], [1685, 52, 1], [1782, 20, 0]]
  .forEach(q => s += tri(q[0], q[1], q[2], q[2] ? '#00f0f0' : '#fff000'));
$('awesome').innerHTML = s;

// ---------- Willy ----------
const stripes = {
  '#c3c3fa': '34-39 43-67 71-76 169-184 193-198 202-216 221-230 253-277 282-286 305-319 342-357 366-375 380-385 394-402 411-422 487-497 501-505 510-514 520-524 529-543 548-552 557-567 571-576 580-590 595-599 604-618 622-627 637-641 646-651 656-660 678-683 692-697 702-716 730-744 748-753 767-781 790-800 809-814 828-842 1132-1146 1150-1155 1160-1164 1225-1234 1239-1244 1248-1262 1281-1286 1346-1360 1379-1384 1388-1398 1402-1407 1416-1426 1439-1457 1463-1468 1477-1486 1491-1495 1500-1505 1514-1524 1533-1542 1551-1561 1565-1575 1580-1589 1622-1626 1720-1748 1753-1784 1790-1795 1799-1808',
  '#fba6a6': '95-104 113-123 127-137 160-165 431-436 441-445 450-454 459-464 478-483 856-861 865-869 879-893 907-911 916-926 930-935 940-944 949-959 968-973 977-991 996-1001 1005-1010 1029-1042 1047-1062 1066-1071 1080-1084 1089-1093 1103-1118 1169-1173 1183-1188 1197-1211 1295-1299 1304-1318 1327-1332 1645-1659 1664-1668',
  '#b45f62': '90-95 244-249 426-431 851-856 1164-1169 1290-1295 1613-1617 1640-1645 1701-1706',
  '#67bc67': '165-169 249-253 483-487 1127-1132 1220-1225 1341-1346 1617-1622 1696-1701 1711-1715'
};
const bands = (set, h) => Object.entries(set).map(([c, list]) => list.split(' ').map(b => {
  const [x0, x1] = b.split('-').map(Number);
  return rect(x0, 0, x1 - x0, h, c);
}).join('')).join('');
const willy = pts('28,18 37,16 42,21 49,16 82,16 87,29 92,53 98,58 102,68 107,54 112,54 120,78 124,66 130,84 139,85 144,73 151,63 157,51 171,46 180,33 186,32 191,42 195,38 200,45 210,33 218,35 229,29 245,48 261,38 270,29 274,21 278,24 284,17 291,26 304,39 312,29 317,17 327,31 331,41 339,43 347,26 354,16 363,19 372,9 378,13 382,9 388,14 396,16 401,12 410,34 415,21 420,16 424,18 429,66 433,77 438,73 443,81 448,71 452,76 457,56 465,59 471,56 476,49 480,54 488,41 495,29 499,41 508,41 531,32 536,23 543,23 549,26 559,31 569,31 579,15 588,14 593,22 598,13 610,7 640,11 648,9 652,18 658,8 667,11 675,18 681,8 689,19 695,14 701,17 718,16 726,21 732,17 741,11 746,19 751,9 760,16 764,26 779,19 789,33 795,18 805,31 811,28 824,32 834,24 840,10 845,16 853,56 859,71 862,63 867,69 873,56 878,56 882,71 887,74 891,86 897,74 905,68 913,66 922,73 928,59 938,58 943,71 947,69 954,84 960,85 971,78 976,66 980,67 989,83 995,74 1009,74 1018,64 1027,51 1040,66 1045,59 1052,82 1058,84 1069,79 1073,69 1078,53 1083,61 1088,49 1093,54 1102,49 1107,66 1113,69 1124,66 1130,44 1139,29 1144,16 1148,26 1153,24 1158,34 1162,29 1167,58 1175,67 1181,53 1187,58 1193,54 1209,64 1218,54 1224,41 1231,35 1237,45 1242,34 1247,38 1251,23 1260,14 1269,28 1275,46 1280,41 1283,29 1293,49 1299,65 1304,63 1310,76 1316,86 1320,85 1325,60 1330,71 1335,51 1340,46 1348,34 1353,14 1358,10 1363,18 1368,30 1377,32 1383,26 1393,16 1399,19 1405,9 1414,21 1423,9 1429,23 1438,37 1444,24 1456,16 1467,20 1474,29 1483,23 1489,26 1494,12 1498,19 1502,11 1512,36 1522,19 1526,24 1531,44 1540,21 1553,24 1558,13 1566,27 1573,10 1578,25 1582,11 1591,16 1602,40 1610,36 1615,49 1622,31 1630,38 1639,39 1646,56 1657,78 1662,74 1668,82 1677,69 1687,58 1696,48 1704,51 1714,43 1722,46 1728,36 1744,29 1751,39 1761,23 1773,13 1783,10 1788,14 1793,9 1797,21 1806,10 1821,22');
s = grid(90) + bands(stripes, 90);
s += area(willy.map(q => [q[0], Math.min(q[1], 27)]), [[28, 27], [LAST, 27]], 'rgba(70,160,70,.5)');
s += area(willy.map(q => [q[0], Math.max(q[1], 66)]), [[28, 66], [LAST, 66]], 'rgba(120,30,30,.5)');
s += line(28, 7.500, LAST, 7.500, '#000', 1, '5 4') + line(28, 86.500, LAST, 86.500, '#000', 1, '5 4');
s += line(28, 27.500, LAST, 27.500, '#000080', 2) + line(28, 46.500, LAST, 46.500, '#1010a0', 1.500, '6 4') + line(28, 66.500, LAST, 66.500, '#d80000', 2);
s += runs(willy, i => {
  const y = (willy[i][1] + willy[i - 1][1]) / 2;
  return y < 27 ? '#00cc00' : y > 67 ? '#900000' : willy[i][1] > willy[i - 1][1] ? '#ff9900' : '#0000cc';
}, 3);
[88, 242, 425, 849, 1162, 1288, 1610, 1639, 1699].forEach(x => s += tri(x, 46, false, '#b40000', 5));
[163, 248, 482, 1125, 1218, 1340, 1615, 1694, 1710].forEach(x => s += tri(x, 46, true, '#0000a8', 5));
$('willy').innerHTML = s;

// ---------- Barra Fuerza ----------
const zones = {
  '#6868c0': '39-44 95-123 128-156 189-193 198-202 230-253 291-319 328-338 417-422 427-459 478-483 497-506 567-580 590-609 627-646 651-697 721-725 749-753 758-772 791-795 814-828 837-875 889-907 912-917 921-931 959-978 982-996 1049-1071 1076-1090 1108-1113 1141-1150 1169-1178 1444-1449 1505-1519 1528-1542 1570-1585 1599-1603 1613-1622 1631-1636 1650-1659 1669-1687 1748-1753 1757-1767 1799-1823',
  '#fffa85': '58-86 282-286 360-394 1155-1164 1192-1220 1230-1239 1258-1272 1276-1286 1290-1304 1337-1351 1360-1365 1370-1388 1398-1416 1421-1426 1449-1472 1477-1491 1781-1795',
  '#40ff40': '86-90 394-413 1220-1230 1239-1258 1272-1276 1286-1290 1304-1337 1351-1360 1365-1370 1388-1398 1416-1421 1426-1435 1472-1477 1491-1500',
  '#640000': '90-95 286-291 413-417 1164-1169 1435-1440 1500-1505 1795-1799'
};
const force = pts('31,54 45,54 59,57 84,59 92,55 104,47 122,44 145,37 154,37 163,41 188,49 204,49 224,53 253,51 269,52 286,57 302,51 318,49 337,48 359,56 388,59 404,58 424,55 433,43 443,18 456,5 469,10 494,16 504,12 522,21 539,35 559,45 576,45 590,46 606,38 624,42 640,38 652,37 673,30 695,18 718,32 726,31 740,40 775,38 807,49 826,48 840,49 856,42 873,38 885,43 901,35 930,35 946,41 960,41 995,37 1020,43 1044,49 1064,42 1091,41 1109,47 1134,55 1162,58 1181,52 1203,59 1220,62 1244,62 1256,59 1280,65 1302,66 1320,62 1336,57 1348,59 1369,57 1383,60 1402,58 1426,59 1438,55 1455,57 1475,59 1489,63 1502,55 1516,45 1540,46 1567,55 1583,44 1602,46 1626,46 1642,49 1667,50 1684,34 1708,41 1736,49 1751,51 1765,51 1789,57 1806,51 1821,48');
s = rect(28, 0, 1795, 68, '#adedfd') + bands(zones, 68);
close.forEach((_, i) => {
  const x = weekX(i), y = at(force, x), up = y < at(force, x - STEP) - .1;
  s += rect(Math.round(x) - 1, y, 3, 68 - y, up ? 'rgba(20,20,230,.75)' : 'rgba(255,50,50,.7)');
});
s += line(28, 56.500, LAST, 56.500, '#000');
$('barra').innerHTML = s;

// ---------- drawing tools ----------
const F = '<text x="12" y="14" fill="#1515ee">F</text>';
const marks = '<path d="M1 14h5M3.500 11.500v5M12 3h5M14.500.5v5" stroke="#1515ee" fill="none"/>';
const oval = c => `<ellipse cx="9" cy="9" rx="6" ry="5" fill="${c}" fill-opacity=".35" stroke="${c}" stroke-width="1.500"/>` + marks;
const box = (c, o) => `<rect x="4" y="4" width="10" height="9" fill="${c}" fill-opacity="${o}" stroke="${c}" stroke-width="1.500"/>` + marks;
const diag = c => `<path d="M0 17L17 1" stroke="${c}" stroke-width="1.500"/>`;
const flat = (c, w = 2) => `<path d="M0 9h18" stroke="${c}" stroke-width="${w}"/>`;
const bell = '<path d="M3 14q3-1 2-6 0-4 4-4t4 4q-1 5 2 6z" fill="#ffe51e" stroke="#a08000"/><path d="M8 15h3v2H8z" fill="#a08000"/>';
const glass = '<circle cx="7" cy="7" r="4.500" fill="#b7cdd7" stroke="#444" stroke-width="1.500"/><path d="M10.500 10.500l5 5" stroke="#222" stroke-width="2.500"/>';
const tools = [
  '<path d="M6 3v11l3-3 2 4 2-1-2-4h4z" fill="#f4f4f4" stroke="#777"/>',
  glass,
  '<path d="M1 5v10h10" fill="none" stroke="#2060ff" stroke-dasharray="2 1"/><g transform="translate(2 0)">' + glass + '</g>',
  bell + '<path d="M1 4h9M10 1l5 5M15 1l-5 5" stroke="#222"/><path d="M12 7v8l2-2 2 3" fill="#fff" stroke="#777"/>',
  bell + '<path d="M1 3v5M17 3v5" stroke="#777"/>',
  '<path d="M1 14L4 2l4 9h5" fill="none" stroke="#223" stroke-width="1.500"/><path d="M7 7h10" stroke="#f85" stroke-dasharray="2 1"/>' + F,
  '<path d="M3 5h12" stroke="#f85" stroke-width="1.500" stroke-dasharray="2 1"/><path d="M3 8h9" stroke="#44f"/>' + F,
  box('#5f95fb', .15), box('#ee1c1c', .3),
  '<path d="M4 14L13 5" stroke="#111" stroke-width="2"/><circle cx="4" cy="14" r="2" fill="none" stroke="#111"/><path d="M9 3h7v7z" fill="#111"/>',
  '<rect x="3" y="2" width="13" height="13" rx="2" fill="#b3cdec" stroke="#6f9cfb"/><text x="6" y="12">T</text>',
  '<circle cx="9" cy="8" r="7" fill="#b3cdec" stroke="#6f9cfb"/><path d="M10 15l4 2v-4" fill="#b3cdec" stroke="#6f9cfb"/><text x="6" y="12" fill="#186b18">T</text>',
  '<path d="M5 13l8-8" stroke="#222" stroke-width="1.500"/><circle cx="4" cy="14" r="2" fill="none" stroke="#222"/><circle cx="14" cy="4" r="2" fill="none" stroke="#222"/>',
  '<circle cx="8" cy="9" r="2" fill="none" stroke="#3faa3f"/><path d="M10 9h8" stroke="#3faa3f" stroke-width="2"/>',
  '<circle cx="8" cy="9" r="2" fill="none" stroke="#ee1c1c"/><path d="M10 9h8" stroke="#ee1c1c" stroke-width="2"/>',
  '<path d="M2 13L13 2l3 3L5 16zM5 11l2 2M8 8l2 2M11 5l2 2" fill="#9aabb5" stroke="#556"/>',
  '<path d="M1 2h16v5H1z" fill="#7fb58f"/><path d="M1 12h16v5H1z" fill="#d59aa8"/><path d="M1 14l4-6 3 4 4-7 3 5 2-5" fill="none" stroke="#dde0ff"/>',
  oval('#ee1c1c'), oval('#8b5a2b'), oval('#1c8a1c'), oval('#20e020'),
  diag('#111'), diag('#3faa3f'), diag('#ee1c1c'), flat('#111', 1), flat('#f8907c'), flat('#10ee10'), flat('#128a12'), flat('#f81010'), flat('#6f9cfb'), flat('#1010b0'),
  '<path d="M9 0v18" stroke="#111"/>',
  '<path d="M1 15h15M1 15L13 3" stroke="#d55" fill="none"/><path d="M8 7q4 2 3 7" stroke="#1515ee" fill="none" stroke-width="2"/><circle cx="15" cy="8" r="2" fill="none" stroke="#1515ee"/>',
  '<circle cx="9" cy="9" r="6.500" fill="none" stroke="#e98050" stroke-width="1.500"/><path d="M6 10h5M8.500 7.500v5M12 5h4M14 3v4" stroke="#1515ee"/>',
  '<path d="M1 4l3 10 4-8 3 8 4-12" fill="none" stroke="#6f9cfb"/><path d="M1 3h3M6 5h4M7 15h4M14 12h4M13 2h4M15 0v4M8 3v4M9 13v4" stroke="#1515ee" stroke-width="1.500"/>',
  '<path d="M2 14l6-8 4 9 4-9" fill="none" stroke="#6f9cfb"/><path d="M1 13h4M9 4h5M11 2v4M12 15h5M14 13v4" stroke="#1515ee" stroke-width="1.500"/>',
  '<path d="M2 9l4-1 2 3 6-9 3 1-8 13z" fill="#33b533" stroke="#186b18"/>',
  '<path d="M2 9h3v7H2zM6 9l4-7q3 0 1 5h5v8l-2 1H6z" fill="#4fc04f" stroke="#186b18"/>',
  '<path d="M2 5l3-3 4 4 4-4 3 3-4 4 4 4-3 3-4-4-4 4-3-3 4-4z" fill="#f01818" stroke="#a00"/>',
  '<path d="M9 2l8 14H1z" fill="#ffbe3c" stroke="#c07a10"/><path d="M9 6v5M9 12.500v2" stroke="#333" stroke-width="2"/>',
  '<path d="M9 2l6 7h-3v7H6V9H3z" fill="#2f9b2f" stroke="#186b18"/>',
  '<path d="M6 6h6v6h3l-6 6-6-6h3z" fill="#e02020"/>'
];
$('tools').innerHTML = tools.map(i => `<button><svg width="18" height="18" viewBox="0 0 18 18">${i}</svg></button>`).join('');
```
